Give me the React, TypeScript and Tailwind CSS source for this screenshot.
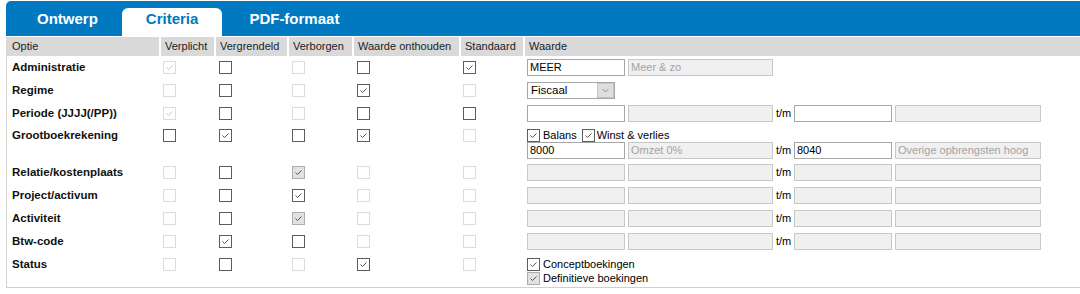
import clsx from "clsx";

type Box = "d" | "dc" | "e" | "ec" | "gc";

type Row = {
  label: string;
  boxes: Box[];
  kind: "admin" | "select" | "range" | "grootboek" | "ro" | "status";
};

const rows: Row[] = [
  { label: "Administratie", boxes: ["dc", "e", "d", "e", "ec"], kind: "admin" },
  { label: "Regime", boxes: ["d", "e", "d", "ec", "d"], kind: "select" },
  { label: "Periode (JJJJ(/PP))", boxes: ["dc", "e", "d", "e", "e"], kind: "range" },
  { label: "Grootboekrekening", boxes: ["e", "ec", "e", "ec", "d"], kind: "grootboek" },
  { label: "Relatie/kostenplaats", boxes: ["d", "e", "gc", "d", "d"], kind: "ro" },
  { label: "Project/activum", boxes: ["d", "e", "ec", "d", "d"], kind: "ro" },
  { label: "Activiteit", boxes: ["d", "e", "gc", "d", "d"], kind: "ro" },
  { label: "Btw-code", boxes: ["d", "ec", "e", "d", "d"], kind: "ro" },
  { label: "Status", boxes: ["d", "e", "d", "ec", "d"], kind: "status" },
];

const headers = [
  "Optie",
  "Verplicht",
  "Vergrendeld",
  "Verborgen",
  "Waarde onthouden",
  "Standaard",
  "Waarde",
];

// padding per checkbox column so the boxes sit where the original puts them
const boxPad = ["pl-[2px]", "pl-[3px]", "pl-[3px]", "pl-[3px]", "pl-[2px]"];

function Check({ s }: { s: Box }) {
  const disabled = s === "d" || s === "dc";
  const checked = s === "dc" || s === "ec" || s === "gc";
  return (
    <span
      className={clsx(
        "flex h-[13px] w-[13px] shrink-0 items-center justify-center border",
        disabled && "border-[#dcdcdc] bg-white",
        s === "gc" && "border-[#adadad] bg-[#e2e2e2]",
        (s === "e" || s === "ec") && "border-[#5c5c5c] bg-white"
      )}
    >
      {checked && (
        <svg width="11" height="11" viewBox="0 0 11 11">
          <path
            d="M2.5 5.5 L4.5 7.5 L8.5 3.5"
            fill="none"
            stroke={disabled ? "#c9c9c9" : "#555"}
            strokeWidth="1"
          />
        </svg>
      )}
    </span>
  );
}

function Field({ w, value, ro }: { w: string; value?: string; ro?: boolean }) {
  return (
    <div
      className={clsx(
        "h-[17px] shrink-0 border px-[2px] text-[11px] leading-[15px]",
        w,
        ro
          ? "border-[#c8c8c8] bg-[#f0f0f0] text-[#a3a3a3]"
          : "border-[#a6a6a6] bg-white text-black"
      )}
    >
      {value}
    </div>
  );
}

function Range({
  from,
  fromDesc,
  to,
  toDesc,
  ro,
}: {
  from?: string;
  fromDesc?: string;
  to?: string;
  toDesc?: string;
  ro?: boolean;
}) {
  return (
    <div className="flex items-center gap-[3px]">
      <Field w="w-[98px]" value={from} ro={ro} />
      <Field w="w-[145px]" value={fromDesc} ro />
      <span className="w-[15px] text-[11px] text-black">t/m</span>
      <Field w="w-[98px]" value={to} ro={ro} />
      <Field w="w-[146px]" value={toDesc} ro />
    </div>
  );
}

function LabeledCheck({ s, text }: { s: Box; text: string }) {
  return (
    <span className="flex items-center gap-[3px] text-[11px] text-black">
      <Check s={s} />
      {text}
    </span>
  );
}

function Waarde({ kind }: { kind: Row["kind"] }) {
  if (kind === "admin")
    return (
      <div className="flex h-[23px] items-center gap-[3px]">
        <Field w="w-[98px]" value="MEER" />
        <Field w="w-[145px]" value="Meer & zo" ro />
      </div>
    );
  if (kind === "select")
    return (
      <div className="flex h-[23px] items-center">
        <div className="flex h-[17px] w-[88px] border border-[#a6a6a6] bg-white">
          <span className="flex-1 pl-[3px] text-[11.5px] leading-[15px] text-black">
            Fiscaal
          </span>
          <span className="flex w-[17px] items-center justify-center border border-[#c4c4c4] bg-[#dedede]">
            <svg width="7" height="5" viewBox="0 0 7 5">
              <path d="M0.5 1 L3.5 4 L6.5 1" fill="none" stroke="#8a8a8a" strokeWidth="1" />
            </svg>
          </span>
        </div>
      </div>
    );
  if (kind === "range")
    return (
      <div className="flex h-[23px] items-center">
        <Range />
      </div>
    );
  if (kind === "grootboek")
    return (
      <div className="pt-[3px]">
        <div className="flex h-[14px] items-center gap-[5px]">
          <LabeledCheck s="ec" text="Balans" />
          <span className="flex items-center gap-[2px] text-[11px] text-black">
            <Check s="ec" />
            Winst &amp; verlies
          </span>
        </div>
        <Range from="8000" fromDesc="Omzet 0%" to="8040" toDesc="Overige opbrengsten hoog" />
      </div>
    );
  if (kind === "ro")
    return (
      <div className="flex h-[23px] items-center">
        <Range ro />
      </div>
    );
  return (
    <div className="pt-[4px]">
      <div className="flex h-[14px] items-center">
        <LabeledCheck s="ec" text="Conceptboekingen" />
      </div>
      <div className="flex h-[14px] items-center">
        <LabeledCheck s="gc" text="Definitieve boekingen" />
      </div>
    </div>
  );
}

export default function App() {
  return (
    <div className="h-[294px] w-[1080px] overflow-hidden bg-white pl-[6px] pt-[1px] font-['Liberation_Sans',Arial,sans-serif]">
      {/* tab strip */}
      <div className="flex h-[35px] items-end rounded-tl-[5px] bg-[#0079c1] pl-[7px]">
        <div className="h-[28px] px-[24px] pt-[2px] text-[15px] font-bold leading-[17px] text-white">
          Ontwerp
        </div>
        <div className="h-[28px] rounded-t-[6px] bg-white px-[24px] pt-[2px] text-[15px] font-bold leading-[17px] text-[#0079c1]">
          Criteria
        </div>
        <div className="h-[28px] px-[27px] pt-[2px] text-[15px] font-bold leading-[17px] text-white">
          PDF-formaat
        </div>
      </div>

      {/* column headers */}
      <div className="mt-[1px] grid h-[19px] grid-cols-[155px_55px_73px_65px_107px_64px_1fr] text-[11px] text-[#222]">
        {headers.map((h, i) => (
          <div
            key={h}
            className={clsx(
              "flex items-center bg-[#d9d9d9]",
              i === 0 ? "pl-[6px]" : "pl-[4px]",
              i < headers.length - 1 && "border-r-2 border-white"
            )}
          >
            {h}
          </div>
        ))}
      </div>

      {/* rows */}
      <div className="border-b border-l border-[#d0d0d0]">
        {rows.map((row) => (
          <div
            key={row.label}
            className={clsx(
              "grid grid-cols-[154px_55px_73px_65px_107px_64px_1fr] items-start",
              row.kind === "grootboek" ? "h-[36px]" : row.kind === "status" ? "h-[34px]" : "h-[23px]"
            )}
          >
            <div
              className={clsx(
                "flex items-center pl-[5px] text-[11.5px] font-bold text-[#111]",
                row.kind === "grootboek" ? "h-[21px]" : "h-[23px]"
              )}
            >
              {row.label}
            </div>
            {row.boxes.map((b, i) => (
              <div
                key={i}
                className={clsx(
                  "flex items-center",
                  boxPad[i],
                  row.kind === "grootboek" ? "h-[21px]" : "h-[23px]"
                )}
              >
                <Check s={b} />
              </div>
            ))}
            <div className="pl-[2px]">
              <Waarde kind={row.kind} />
            </div>
          </div>
        ))}
      </div>
    </div>
  );
}
